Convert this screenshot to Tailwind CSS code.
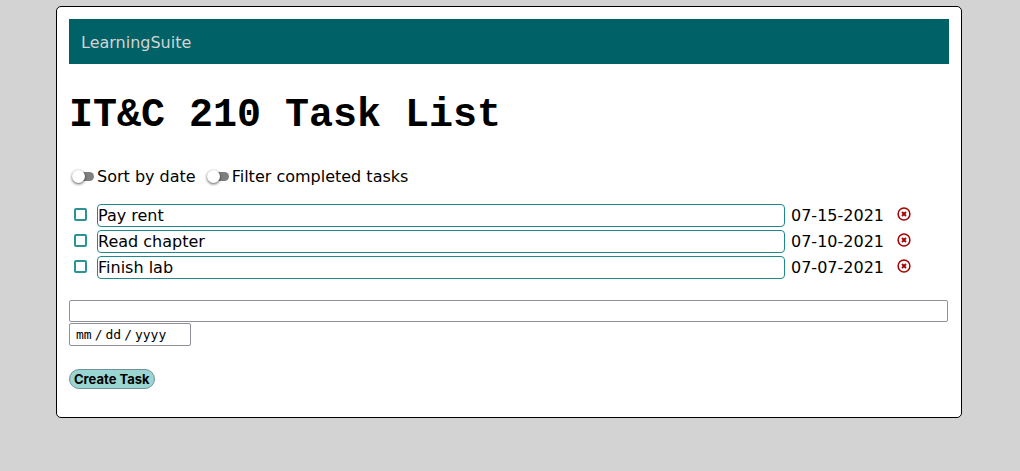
<!DOCTYPE html>
<html lang="en">
<head>
<meta charset="utf-8">
<title>IT&amp;C 210 Task List</title>
<script src="https://cdn.jsdelivr.net/npm/@tailwindcss/browser@4"></script>
</head>
<body class="bg-[#d3d3d3] font-['Verdana','DejaVu_Sans',sans-serif] text-base text-black">
<svg class="hidden">
  <symbol id="remove" viewBox="0 0 14 14"><circle cx="7" cy="7" r="5.9" fill="none" stroke="currentColor" stroke-width="1.5"/><path d="M5 5l4 4M9 5l-4 4" fill="none" stroke="currentColor" stroke-width="1.8"/></symbol>
</svg>
<main class="mt-1.5 mr-[58px] ml-14 rounded-[5px] border border-black bg-white px-3 pt-3 pb-7">
  <nav class="bg-[#006166] px-3 pt-[13px] pb-[11px] leading-[21px]"><a href="#" class="text-[#d3d3d3]">LearningSuite</a></nav>
  <h1 class="mt-7 font-['Courier_New','Liberation_Mono',monospace] text-[40px] leading-[48px] font-bold">IT&amp;C 210 Task List</h1>
  <div class="mt-6 flex h-6 items-center gap-2 leading-6">
    <label class="flex items-center gap-[3px]"><input type="checkbox" class="relative ml-[5px] h-[9px] w-5 appearance-none rounded-full bg-[#7f7f7f] before:absolute before:-top-[2px] before:-left-[2px] before:size-[13px] before:rounded-full before:bg-white before:shadow-[0_1px_3px_#000000b0] before:content-[''] checked:before:left-2"><span class="pt-px">Sort by date</span></label>
    <label class="flex items-center gap-[3px]"><input type="checkbox" class="relative ml-[5px] h-[9px] w-5 appearance-none rounded-full bg-[#7f7f7f] before:absolute before:-top-[2px] before:-left-[2px] before:size-[13px] before:rounded-full before:bg-white before:shadow-[0_1px_3px_#000000b0] before:content-[''] checked:before:left-2"><span class="pt-px">Filter completed tasks</span></label>
  </div>
  <ul class="mt-4 flex flex-col gap-[3px] pr-[38px] pl-[5px] leading-5">
    <li class="flex h-[23px]">
      <input type="checkbox" aria-label="Complete Pay rent" class="mt-[4px] mr-[10px] size-[13px] appearance-none rounded-[2px] border-2 border-[#2a9396] checked:bg-[#2a9396]">
      <span class="flex-1 rounded-[4px] border border-[#1f8a8c] pt-px">Pay rent</span>
      <time class="w-[96px] ml-1.5 pt-[2px]" datetime="2021-07-15">07-15-2021</time>
      <button aria-label="Delete Pay rent" class="mt-[3px] ml-2.5 size-[14px] text-[#a50000]"><svg class="size-[14px]"><use href="#remove"/></svg></button>
    </li>
    <li class="flex h-[23px]">
      <input type="checkbox" aria-label="Complete Read chapter" class="mt-[4px] mr-[10px] size-[13px] appearance-none rounded-[2px] border-2 border-[#2a9396] checked:bg-[#2a9396]">
      <span class="flex-1 rounded-[4px] border border-[#1f8a8c] pt-px">Read chapter</span>
      <time class="w-[96px] ml-1.5 pt-[2px]" datetime="2021-07-10">07-10-2021</time>
      <button aria-label="Delete Read chapter" class="mt-[3px] ml-2.5 size-[14px] text-[#a50000]"><svg class="size-[14px]"><use href="#remove"/></svg></button>
    </li>
    <li class="flex h-[23px]">
      <input type="checkbox" aria-label="Complete Finish lab" class="mt-[4px] mr-[10px] size-[13px] appearance-none rounded-[2px] border-2 border-[#2a9396] checked:bg-[#2a9396]">
      <span class="flex-1 rounded-[4px] border border-[#1f8a8c] pt-px">Finish lab</span>
      <time class="w-[96px] ml-1.5 pt-[2px]" datetime="2021-07-07">07-07-2021</time>
      <button aria-label="Delete Finish lab" class="mt-[3px] ml-2.5 size-[14px] text-[#a50000]"><svg class="size-[14px]"><use href="#remove"/></svg></button>
    </li>
  </ul>
  <form class="mt-[21px] mr-px flex flex-col items-start">
    <input type="text" aria-label="Task" class="h-[22px] w-full rounded-[2px] border border-[#8f8f9d] px-1">
    <input type="date" aria-label="Due date" class="mt-px h-[23px] w-[122px] rounded-[2px] border border-[#8f8f9d] px-[6px] font-['DejaVu_Sans_Mono',monospace] text-[13px] [&::-webkit-calendar-picker-indicator]:hidden [&::-webkit-datetime-edit-fields-wrapper]:p-0 [&::-webkit-datetime-edit-text]:px-[3px] [&::-webkit-datetime-edit-month-field]:p-0 [&::-webkit-datetime-edit-day-field]:p-0 [&::-webkit-datetime-edit-year-field]:p-0">
    <button type="submit" class="mt-[23px] h-5 rounded-full border border-[#71909f] bg-[#9ad6d1] px-1 font-['Inter',sans-serif] text-[13px] leading-[18px] font-bold">Create Task</button>
  </form>
</main>
</body>
</html>
